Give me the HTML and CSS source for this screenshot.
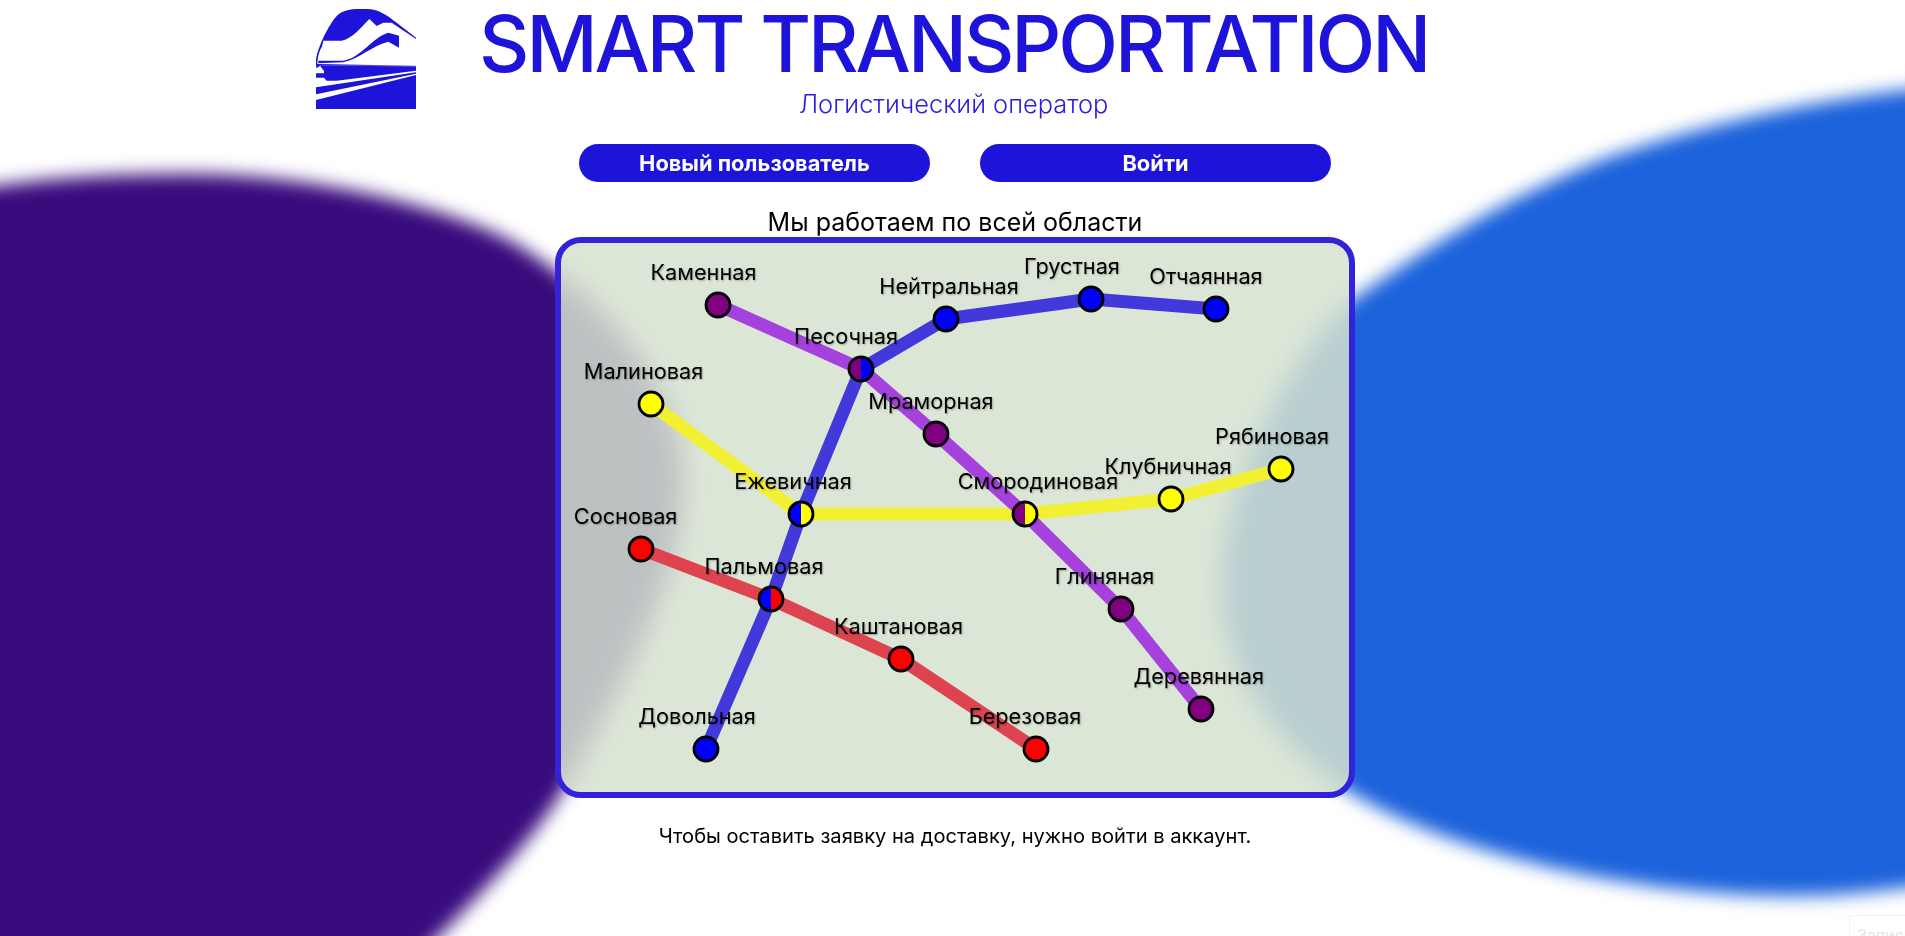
FILE: index.html
```html
<!DOCTYPE html>
<html lang="ru">
<head>
  <meta charset="UTF-8">
  <title>Smart Transportation</title>
  <link rel="stylesheet" href="styles.css">
</head>
<body>
  <svg class="backdrop" viewBox="0 0 1905 936" width="1905" height="936">
    <path class="blob blob-left" d="M-30 190 C40 178 110 174 190 174 C300 174 420 200 497 234 C570 270 683 370 683 480 C683 580 620 690 557 800 C520 855 470 905 400 975 L-30 975 Z"/>
    <path class="blob blob-right" d="M1960 84 C1830 95 1700 125 1609 157 C1510 195 1430 245 1345 305 C1280 370 1221 490 1221 590 C1221 680 1290 760 1358 797 C1450 850 1620 895 1790 896 C1840 896 1880 892 1960 880 Z"/>
  </svg>

  <div class="page">
    <header class="top">
      <svg class="logo" viewBox="48 27 300 300" width="100" height="100">
        <path class="logo-dark" d="M348 113 L290 68 C260 45 235 27 200 27 L165 27 C130 30 115 40 100 60 C80 90 65 120 55 150 C48 170 45 190 50 205 L60 197 L348 197 Z"/>
        <path class="logo-light" d="M70 122 L125 122 C160 115 185 80 208 57 L230 78 L250 68 L275 68 L348 117 L348 197 L52 192 C52 175 58 150 66 140 Z"/>
        <path class="logo-dark" d="M55 182 L130 182 C180 175 220 110 265 98 L297 107 L297 143 L265 125 C220 135 180 175 130 187 L55 190 Z"/>
        <path class="logo-dark" d="M60 197 L348 199 L348 212 L110 242 L80 242 L72 233 L48 233 L48 220 L72 220 L72 213 Z"/>
        <path class="logo-dark" d="M48 262 L348 217 L348 221 L48 283 Z"/>
        <path class="logo-dark" d="M48 300 L348 225 L348 327 L48 327 Z"/>
      </svg>
      <div class="brand">
        <h1 class="brand-title">SMART TRANSPORTATION</h1>
        <p class="brand-sub">Логистический оператор</p>
      </div>
    </header>

    <nav class="actions">
      <a class="btn" href="#">Новый пользователь</a>
      <a class="btn" href="#">Войти</a>
    </nav>

    <h2 class="map-title">Мы работаем по всей области</h2>

    <div class="map">
      <svg class="scheme" viewBox="0 0 788 549" width="788" height="549">
        <defs>
          <linearGradient id="pb"><stop offset=".5" stop-color="#800080"/><stop offset=".5" stop-color="#0000ff"/></linearGradient>
          <linearGradient id="by"><stop offset=".5" stop-color="#0000ff"/><stop offset=".5" stop-color="#ffff00"/></linearGradient>
          <linearGradient id="py"><stop offset=".5" stop-color="#800080"/><stop offset=".5" stop-color="#ffff00"/></linearGradient>
          <linearGradient id="br"><stop offset=".5" stop-color="#0000ff"/><stop offset=".5" stop-color="#ff0000"/></linearGradient>
        </defs>

        <polyline class="line line-red" points="80,306 210,356 340,416 475,506"/>
        <polyline class="line line-yellow" points="90,161 240,271 464,271 610,256 720,226"/>
        <polyline class="line line-purple" points="157,62 300,126 375,191 464,271 560,366 640,466"/>
        <polyline class="line line-blue" points="145,506 210,356 240,271 300,126 385,76 530,56 655,66"/>

        <circle class="st st-purple" cx="157" cy="62" r="12"/>
        <circle class="st st-blue" cx="385" cy="76" r="12"/>
        <circle class="st st-purple" cx="375" cy="191" r="12"/>
        <circle class="st st-yellow" cx="90" cy="161" r="12"/>
        <circle class="st st-red" cx="80" cy="306" r="12"/>
        <circle class="st st-red" cx="340" cy="416" r="12"/>
        <circle class="st st-blue" cx="145" cy="506" r="12"/>
        <circle class="st st-blue" cx="530" cy="56" r="12"/>
        <circle class="st st-blue" cx="655" cy="66" r="12"/>
        <circle class="st st-yellow" cx="720" cy="226" r="12"/>
        <circle class="st st-yellow" cx="610" cy="256" r="12"/>
        <circle class="st st-purple" cx="560" cy="366" r="12"/>
        <circle class="st st-purple" cx="640" cy="466" r="12"/>
        <circle class="st st-red" cx="475" cy="506" r="12"/>

        <!-- пересадки -->
        <circle class="st st-purple-blue" cx="300" cy="126" r="12"/>
        <circle class="st st-blue-yellow" cx="240" cy="271" r="12"/>
        <circle class="st st-purple-yellow" cx="464" cy="271" r="12"/>
        <circle class="st st-blue-red" cx="210" cy="356" r="12"/>

        <text class="label" x="142.5" y="37">Каменная</text>
        <text class="label" x="285" y="101">Песочная</text>
        <text class="label" x="388" y="51">Нейтральная</text>
        <text class="label" x="370" y="166">Мраморная</text>
        <text class="label" x="82.5" y="136">Малиновая</text>
        <text class="label" x="232" y="246">Ежевичная</text>
        <text class="label" x="64.6" y="281">Сосновая</text>
        <text class="label" x="203" y="331">Пальмовая</text>
        <text class="label" x="337.5" y="391">Каштановая</text>
        <text class="label" x="136" y="481">Довольная</text>
        <text class="label" x="464" y="481">Березовая</text>
        <text class="label" x="511" y="31">Грустная</text>
        <text class="label" x="645" y="41">Отчаянная</text>
        <text class="label" x="711" y="201">Рябиновая</text>
        <text class="label" x="607" y="231">Клубничная</text>
        <text class="label" x="477" y="246">Смородиновая</text>
        <text class="label" x="543.5" y="341">Глиняная</text>
        <text class="label" x="637.7" y="441">Деревянная</text>
      </svg>
    </div>

    <p class="note">Чтобы оставить заявку на доставку, нужно войти в аккаунт.</p>
  </div>

  <div class="corner-box">Запись</div>
</body>
</html>
```

FILE: styles.css
```css
:root {
  --brand: #1e13d8;
}

* {
  box-sizing: border-box;
}

html, body {
  height: 100%;
}

body {
  margin: 0;
  background: #fff;
  font-family: Inter, "Noto Sans", sans-serif;
  color: #000;
  overflow: hidden;
}

.backdrop {
  position: fixed;
  left: 0;
  top: 0;
}

.blob {
  filter: blur(9px);
}

.blob-left {
  fill: #380a7c;
}

.blob-right {
  fill: #1c62db;
}

.page {
  position: relative;
  width: 800px;
  margin-left: 555px;
}

.top {
  display: flex;
  align-items: flex-start;
  gap: 63px;
  margin-left: -239px;
  padding-top: 9px;
}

.logo {
  flex: none;
}

.logo-dark {
  fill: var(--brand);
}

.logo-light {
  fill: #fff;
}

.brand {
  width: 951px;
  text-align: center;
}

.brand-title {
  margin: -9px 0 0;
  font-size: 78px;
  font-weight: 500;
  letter-spacing: -3px;
  line-height: 88px;
  color: var(--brand);
  white-space: nowrap;
}

.brand-sub {
  margin: 1px 0 0;
  font-size: 25.4px;
  font-weight: 300;
  line-height: 30px;
  color: #2a20dc;
}

.actions {
  display: flex;
  justify-content: space-between;
  width: 752px;
  margin: 25px 0 0 24px;
}

.btn {
  width: 351px;
  height: 38px;
  border-radius: 19px;
  background: var(--brand);
  color: #fff;
  font-size: 21.8px;
  font-weight: 700;
  line-height: 38px;
  text-align: center;
  text-decoration: none;
}

.map-title {
  margin: 25px 0 -1px;
  font-size: 25px;
  font-weight: 400;
  line-height: 31px;
  text-align: center;
}

.map {
  width: 800px;
  height: 561px;
  border: 6px solid #3023da;
  border-radius: 26px;
  background: rgba(214, 226, 207, 0.85);
  backdrop-filter: blur(10px);
}

.scheme {
  display: block;
}

.line {
  fill: none;
  stroke-width: 13;
  stroke-linejoin: round;
}

.line-red { stroke: #dd4450; }
.line-yellow { stroke: #f2f032; }
.line-purple { stroke: #a542dd; }
.line-blue { stroke: #4339db; }

.st {
  stroke: #000;
  stroke-width: 2.8;
}

.st-purple { fill: #800080; }
.st-blue { fill: #0000ff; }
.st-yellow { fill: #ffff00; }
.st-red { fill: #ff0000; }
.st-purple-blue { fill: url(#pb); }
.st-blue-yellow { fill: url(#by); }
.st-purple-yellow { fill: url(#py); }
.st-blue-red { fill: url(#br); }

.label {
  font-size: 21.7px;
  text-anchor: middle;
  text-shadow: 1px 1px 2px rgba(0, 0, 0, 0.3);
}

.note {
  margin: 26px 0 0;
  font-size: 20.1px;
  line-height: 24px;
  text-align: center;
}

.corner-box {
  position: fixed;
  left: 1849px;
  top: 915px;
  width: 120px;
  height: 40px;
  padding: 9px 7px;
  background: #fff;
  border: 1px solid #f2f2f2;
  color: #e4e4e4;
  font-size: 16px;
}
```
